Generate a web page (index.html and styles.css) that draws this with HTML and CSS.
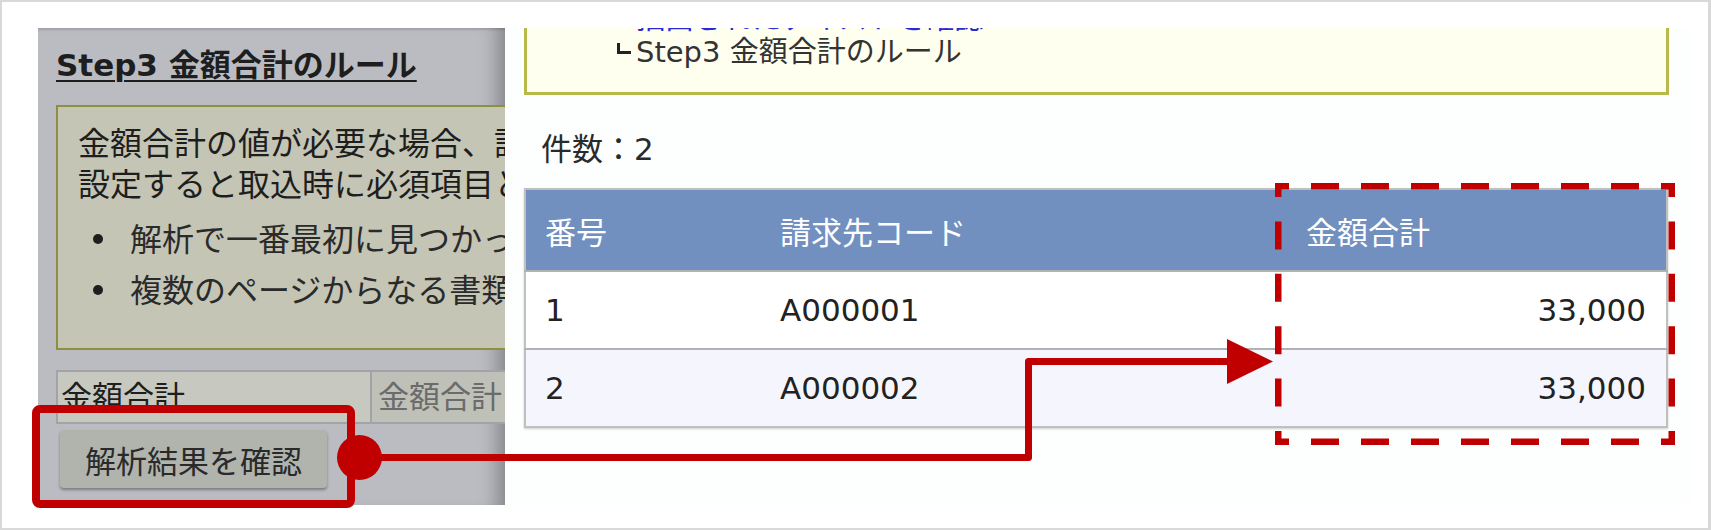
FILE: index.html
```html
<!DOCTYPE html>
<html lang="ja">
<head>
<meta charset="utf-8">
<title>Step3 金額合計のルール</title>
<link rel="stylesheet" href="styles.css">
</head>
<body>
	<div class="frame">
		<div class="shot">

			<!-- the settings page, dimmed behind the dialog -->
			<div class="backdrop">
				<h2 class="step-title">Step3 金額合計のルール</h2>

				<div class="note note-dim">
					<p>金額合計の値が必要な場合、請求書上の金額合計の位置を指定してください。<br>設定すると取込時に必須項目として扱われます。</p>
					<ul>
						<li>解析で一番最初に見つかった値が設定されます。</li>
						<li>複数のページからなる書類の場合、最初のページの値が使われます。</li>
					</ul>
				</div>

				<table class="field-table">
					<tr>
						<td class="field-name">金額合計</td>
						<td class="field-input">金額合計</td>
					</tr>
				</table>

				<button class="btn" type="button">解析結果を確認</button>
			</div>

			<!-- result dialog -->
			<div class="dialog">
				<div class="note note-crumb">
					<div class="crumb-link">抽出されたテキストを確認</div>
					<div class="crumb-current"><span class="crumb-mark" aria-hidden="true"></span>Step3 金額合計のルール</div>
				</div>

				<p class="count">件数：2</p>

				<table class="result">
					<tr>
						<th class="col-no">番号</th>
						<th class="col-code">請求先コード</th>
						<th>金額合計</th>
					</tr>
					<tr>
						<td>1</td>
						<td>A000001</td>
						<td class="num">33,000</td>
					</tr>
					<tr class="alt">
						<td>2</td>
						<td>A000002</td>
						<td class="num">33,000</td>
					</tr>
				</table>
			</div>
		</div>

		<!-- annotations drawn over the screenshot -->
		<svg class="marks" width="1711" height="530" viewBox="0 0 1711 530">
			<rect class="mark-box" x="36" y="409" width="315" height="95" rx="4"></rect>
			<polyline class="mark-line" points="359,457.5 1028.5,457.5 1028.5,361.5 1232,361.5"></polyline>
			<polygon class="mark-fill" points="1227,339 1273,361.5 1227,384"></polygon>
			<circle class="mark-fill" cx="359.5" cy="457.5" r="22.5"></circle>
			<path class="mark-dash-h" d="M1275 186.25 H1675 M1275 441.75 H1675"></path>
			<path class="mark-dash-v" d="M1278.25 183 V445 M1671.75 183 V445"></path>
		</svg>
	</div>
</body>
</html>
```

FILE: styles.css
```css
 body{
	margin: 0;
	background: #fff;
	font-family: "DejaVu Sans", "Noto Sans CJK JP", sans-serif;
	color: #222;
 }

 .frame{
	position: relative;
	box-sizing: border-box;
	width: 1711px;
	height: 530px;
	border: 2px solid #d9d9d9;
	border-right-width: 3px;
	background: #fff;
	overflow: hidden;
 }

 .shot{
	display: flex;
	margin: 26px 0 0 36px;
	height: 477px;
 }

 /* dimmed page */

 .backdrop{
	box-sizing: border-box;
	width: 467px;
	flex: none;
	padding: 17px 0 0 18px;
	background: #bbbcc2;
	overflow: hidden;
	box-shadow: inset -20px 0 18px -12px rgba(0,0,0,0.28), inset 0 3px 2px -1px rgba(0,0,0,0.12);
	color: #1e1e1e;
 }

 .step-title{
	margin: 0;
	font-size: 31px;
	line-height: 40px;
	font-weight: bold;
	text-decoration: underline;
	text-decoration-thickness: 2px;
	text-underline-offset: 4px;
	white-space: nowrap;
 }

 .note{
	white-space: nowrap;
 }

 .note-dim{
	width: 900px;
	margin-top: 20px;
	padding: 17px 0 36px 20px;
	border: 2px solid #8e8f40;
	background: #c4c5b5;
	font-size: 32px;
	line-height: 41px;
 }

 .note-dim p{
	margin: 0;
 }

 .note-dim ul{
	margin: 14px 0 0;
	padding: 0;
	list-style: none;
 }

 .note-dim li{
	margin-top: 10px;
	color: #2a2a2a;
 }

 .note-dim li:first-child{
	margin-top: 0;
 }

 .note-dim li::before{
	content: "";
	display: inline-block;
	width: 10px;
	height: 10px;
	margin: 0 27px 0 15px;
	border-radius: 50%;
	background: #1e1e1e;
	vertical-align: 7px;
 }

 .field-table{
	width: 800px;
	margin-top: 20px;
	border-collapse: collapse;
	table-layout: fixed;
	font-size: 31px;
	white-space: nowrap;
 }

 .field-table td{
	height: 50px;
	padding: 0;
	border: 2px solid #a2a3a6;
	line-height: 50px;
 }

 .field-table .field-name{
	width: 309px;
	padding-left: 3px;
	background: #c7c9c0;
 }

 .field-table .field-input{
	padding-left: 6px;
	background: #bfc0b7;
	color: #6a6b6b;
 }

 .btn{
	display: block;
	width: 267px;
	height: 58px;
	margin: 6px 0 0 4px;
	padding: 0;
	border: none;
	border-radius: 4px;
	background: #b1b3ad;
	box-shadow: 0 2px 3px rgba(0,0,0,0.35);
	font-family: inherit;
	font-size: 31px;
	color: #2a2a2a;
 }

 /* dialog */

 .dialog{
	box-sizing: border-box;
	width: 1185px;
	flex: none;
	padding: 0 21px 0 19px;
	background: #fdfefe;
	overflow: hidden;
 }

 .note-crumb{
	margin-top: -38px;
	padding: 10px 0 23px 90px;
	border: 3px solid #b7ba4a;
	background: #fffff0;
	font-size: 29px;
	line-height: 33px;
	color: #333;
 }

 .crumb-link{
	margin-left: 19px;
	color: #2a2ad0;
 }

 .crumb-mark{
	display: inline-block;
	width: 11px;
	height: 8px;
	margin-right: 5px;
	border-left: 3px solid #222;
	border-bottom: 3px solid #222;
	vertical-align: 8px;
 }

 .count{
	margin: 34px 0 0 17px;
	font-size: 31px;
	line-height: 40px;
	color: #2a2a2a;
 }

 .result{
	width: 1144px;
	margin-top: 19px;
	border-collapse: collapse;
	border: 2px solid #c0c0c0;
	box-shadow: 0 1px 2px rgba(0,0,0,0.2);
	font-size: 31px;
 }

 .result th{
	height: 80px;
	padding: 0 0 0 19px;
	background: #7290bf;
	color: #fff;
	font-weight: normal;
	text-align: left;
 }

 .result td{
	height: 76px;
	padding: 0 0 0 19px;
	border-top: 2px solid #b2b2b2;
	background: #fff;
 }

 .result .alt td{
	background: #f5f6fd;
 }

 .col-no{
	width: 216px;
 }

 .col-code{
	width: 507px;
 }

 .result .num{
	padding: 0 20px 0 0;
	text-align: right;
 }

 /* annotations */

 .marks{
	position: absolute;
	top: -2px;
	left: -2px;
	pointer-events: none;
 }

 .mark-box{
	fill: none;
	stroke: #c00000;
	stroke-width: 8;
 }

 .mark-line{
	fill: none;
	stroke: #c00000;
	stroke-width: 7;
	stroke-linejoin: round;
 }

 .mark-fill{
	fill: #c00000;
 }

 .mark-dash-h,
 .mark-dash-v{
	fill: none;
	stroke: #c00000;
	stroke-width: 6.5;
	stroke-dasharray: 28 22;
	stroke-dashoffset: 14;
 }

 .mark-dash-v{
	stroke-dasharray: 28 24.4;
 }
```
